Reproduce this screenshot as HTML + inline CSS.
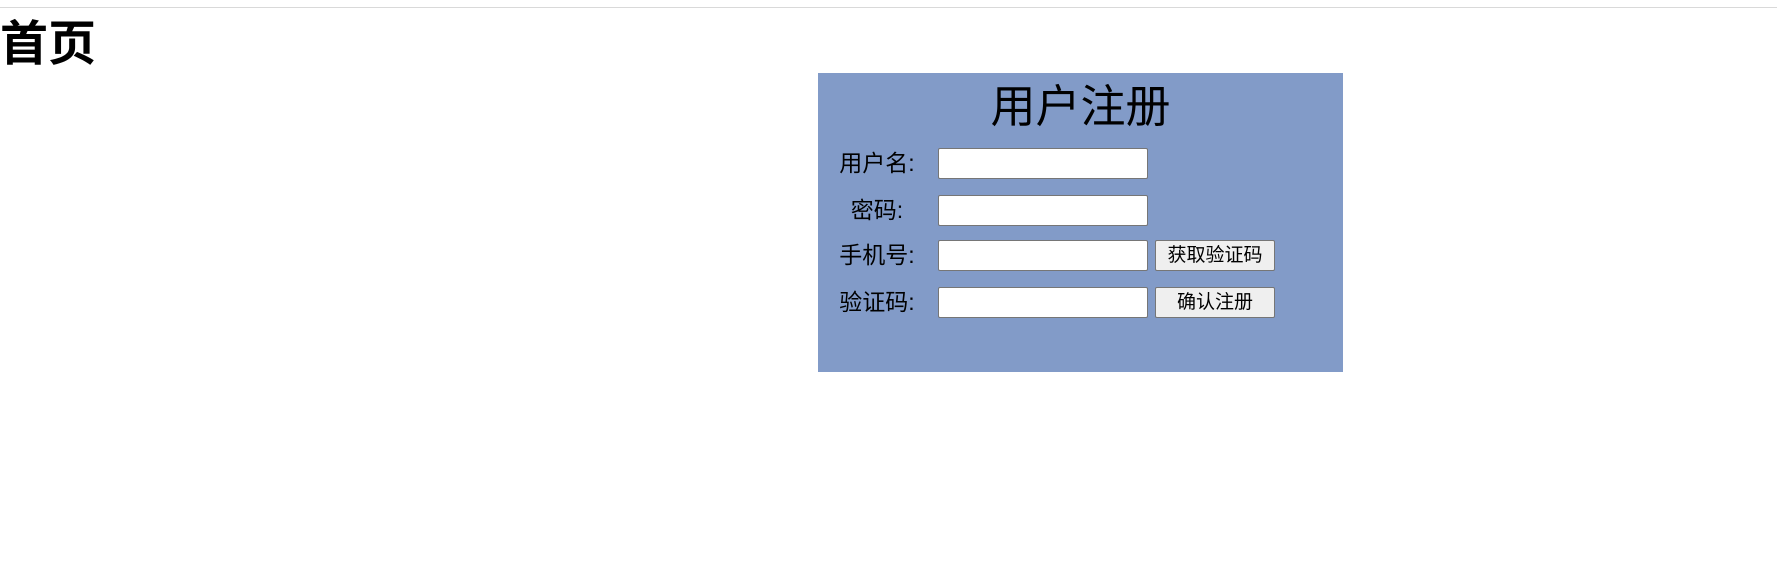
<!DOCTYPE html>
<html><head><meta charset="utf-8"><style>
body{margin:0;width:1777px;height:569px;background:#fff;font-family:"Liberation Sans","Noto Sans CJK SC",sans-serif;position:relative;overflow:hidden}
.hr{position:absolute;left:0;top:7px;width:1777px;height:1px;background:#d9d9d9}
h1{position:absolute;left:0;top:17px;margin:0;font-size:48px;font-weight:bold;line-height:56px}
.box{position:absolute;left:818px;top:73px;width:525px;height:299px;background:#829bc8}
.t{position:absolute;left:0;width:525px;top:5px;text-align:center;font-size:45px;line-height:58px;color:#000}
.l{position:absolute;left:19px;width:80px;text-align:center;font-size:23px;line-height:31px}
.in{position:absolute;left:120px;width:208px;height:29px;background:#fff;border:1px solid #767676;border-radius:2px}
.b{position:absolute;left:337px;width:118px;height:29px;background:#efefef;border:1px solid #767676;border-radius:2px;font-size:19px;line-height:29px;text-align:center}
</style></head><body>
<div class="hr"></div>
<h1>首页</h1>
<div class="box">
<div class="t">用户注册</div>
<div class="l" style="top:75px">用户名:</div><div class="in" style="top:75px"></div>
<div class="l" style="top:122px">密码:</div><div class="in" style="top:122px"></div>
<div class="l" style="top:167px">手机号:</div><div class="in" style="top:167px"></div><div class="b" style="top:167px">获取验证码</div>
<div class="l" style="top:214px">验证码:</div><div class="in" style="top:214px"></div><div class="b" style="top:214px">确认注册</div>
</div>
</body></html>
